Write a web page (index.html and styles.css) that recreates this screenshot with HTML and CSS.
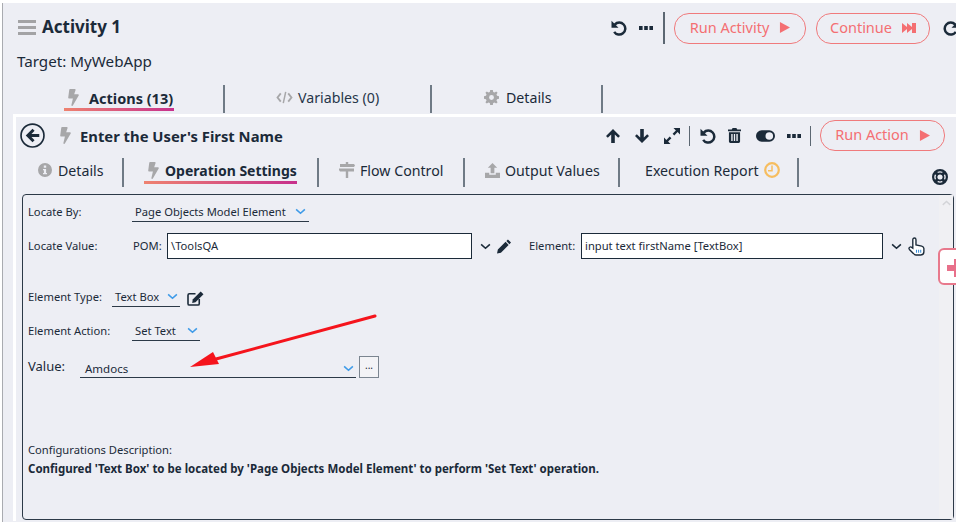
FILE: index.html
```html
<!DOCTYPE html>
<html lang="en">
<head>
    <meta charset="UTF-8">
    <title>Activity 1</title>
    <link rel="stylesheet" href="styles.css">
</head>
<body>
    <svg class="sprites" xmlns="http://www.w3.org/2000/svg">
        <symbol id="i-bolt" viewBox="0 0 320 512"><path d="M296 160H180.6l42.6-129.8C227.2 15 215.7 0 200 0H56C44 0 33.8 8.9 32.2 20.8l-32 240C-1.7 275.2 9.5 288 24 288h118.7L96.6 482.5c-3.6 15.2 8 29.5 23.3 29.5 8.4 0 16.4-4.4 20.8-12l176-304c9.3-15.9-2.2-36-20.7-36z"/></symbol>
        <symbol id="i-undo" viewBox="0 0 16 16"><path d="M3.800 4.600A6 6 0 1 1 3.200 11.800" fill="none" stroke="currentColor" stroke-width="2.500"/><path d="M0.500 0.800 7.500 7.800H0.500z"/></symbol>
        <symbol id="i-redo" viewBox="0 0 16 16"><path d="M12.200 4.600A6 6 0 1 0 12.800 11.800" fill="none" stroke="currentColor" stroke-width="2.500"/><path d="M15.500 0.800 8.500 7.800H15.500z"/></symbol>
        <symbol id="i-dots" viewBox="0 0 14 4"><path d="M0 0h3.600v4H0zM5.200 0h3.600v4H5.200zM10.400 0H14v4h-3.600z"/></symbol>
        <symbol id="i-up" viewBox="0 0 14 14"><path d="M7 0 14 7 12.200 8.800 8.800 5.500V14H5.200V5.500L1.800 8.800 0 7z"/></symbol>
        <symbol id="i-down" viewBox="0 0 14 14"><path d="M7 14 0 7 1.800 5.200 5.200 8.500V0H8.800V8.500L12.200 5.200 14 7z"/></symbol>
        <symbol id="i-expand" viewBox="0 0 16 16"><path d="M9.500 0H16V6.500L13.600 4.100 10.300 7.400 8.600 5.700 11.900 2.400zM0 16V9.500L2.400 11.900 5.700 8.600 7.400 10.300 4.100 13.600 6.500 16z"/></symbol>
        <symbol id="i-trash" viewBox="0 0 14 16"><path d="M5 0H9L10 1.500H14V3.500H0V1.500H4zM1 4.500H13V14.500Q13 16 11.500 16H2.500Q1 16 1 14.500zM3.500 6.500V14H5V6.500zM6.300 6.500V14H7.700V6.500zM9 6.500V14H10.500V6.500z" fill-rule="evenodd"/></symbol>
        <symbol id="i-toggle" viewBox="0 0 20 12"><path d="M6 0H14A6 6 0 0 1 14 12H6A6 6 0 0 1 6 0ZM14 2A4 4 0 1 0 14 10 4 4 0 0 0 14 2Z" fill-rule="evenodd"/></symbol>
        <symbol id="i-code" viewBox="0 0 18 14"><path d="M5 2.500 1.500 7 5 11.500M13 2.500 16.500 7 13 11.500" fill="none" stroke="currentColor" stroke-width="2"/><path d="M10.300 1 7.700 13" fill="none" stroke="currentColor" stroke-width="1.600"/></symbol>
        <symbol id="i-cog" viewBox="0 0 16 16"><path d="M6.600 0H9.400L9.800 2.100 11.300 2.700 13 1.500 14.500 3 13.300 4.700 13.900 6.200 16 6.600V9.400L13.900 9.800 13.300 11.300 14.500 13 13 14.500 11.300 13.300 9.800 13.900 9.400 16H6.600L6.200 13.900 4.700 13.300 3 14.500 1.500 13 2.700 11.300 2.100 9.800 0 9.400V6.600L2.100 6.200 2.700 4.700 1.500 3 3 1.500 4.700 2.700 6.200 2.100ZM8 5.400A2.600 2.600 0 1 0 8 10.600 2.600 2.600 0 0 0 8 5.400Z" fill-rule="evenodd"/></symbol>
        <symbol id="i-info" viewBox="0 0 14 14"><path d="M7 0A7 7 0 1 1 7 14 7 7 0 0 1 7 0ZM5.800 2.600V4.800H8.200V2.600ZM5 6V7.200H5.900V10H5V11.300H9V10H8.100V6Z" fill-rule="evenodd"/></symbol>
        <symbol id="i-sign" viewBox="0 0 16 16"><path d="M6.800 0H9.200V2H15L16 3.500 15 5H1V2H6.800ZM0 6.500H15V9.500H9.200V16H6.800V9.500H1L0 8Z"/></symbol>
        <symbol id="i-upload" viewBox="0 0 16 16"><path d="M8 0 13 5H10V11H6V5H3ZM0 10.500H4.500V12.500H11.500V10.500H16V16H0Z"/></symbol>
        <symbol id="i-clock" viewBox="0 0 16 16"><circle cx="8" cy="8" r="6.800" fill="none" stroke="currentColor" stroke-width="2.200"/><path d="M8 3.500V8.800H4" fill="none" stroke="currentColor" stroke-width="1.500"/></symbol>
        <symbol id="i-buoy" viewBox="0 0 16 16"><path d="M8 0A8 8 0 1 1 8 16 8 8 0 0 1 8 0ZM8 2.200A5.800 5.800 0 1 0 8 13.800 5.800 5.800 0 0 0 8 2.200Z" fill-rule="evenodd"/><circle cx="8" cy="8" r="3.500" fill="none" stroke="currentColor" stroke-width="1.800"/><path d="M2 4.500 4.500 2 6.800 5 5 6.800ZM11.500 2 14 4.500 11 6.800 9.200 5ZM14 11.500 11.500 14 9.200 11 11 9.200ZM4.500 14 2 11.500 5 9.200 6.800 11Z"/></symbol>
        <symbol id="i-play" viewBox="0 0 12 12"><path d="M1 0 12 6 1 12z"/></symbol>
        <symbol id="i-forward" viewBox="0 0 14 10"><path d="M0 0 5 4V0L10 4V0H14V10H10V6L5 10V6L0 10Z"/></symbol>
        <symbol id="i-chevron" viewBox="0 0 12 8"><path d="M1 1.500 6 6 11 1.500" fill="none" stroke="currentColor" stroke-width="1.800"/></symbol>
        <symbol id="i-pencil" viewBox="0 0 16 16"><path d="M12.500 0 16 3.500 14.200 5.300 10.700 1.800ZM9.800 2.700 13.300 6.200 4.500 15 0 16 1 11.500Z"/></symbol>
        <symbol id="i-edit" viewBox="0 0 18 16"><path d="M13 8.500V13.500Q13 15 11.500 15H2.500Q1 15 1 13.500V4.500Q1 3 2.500 3H9" fill="none" stroke="currentColor" stroke-width="1.700"/><path d="M14.500 0.500 17.500 3.500 9 12 5.500 12.800 6 9Z"/></symbol>
        <symbol id="i-hand" viewBox="0 0 16 18"><path d="M4.500 10.500V2.500A1.500 1.500 0 0 1 7.500 2.500V7.500L13 8.600Q15 9.200 15 11V14Q15 17 12 17H7.500Q6 17 5 15.600L1.300 11.800Q0.300 10.500 1.500 9.700 2.500 9 3.500 9.800Z" fill="#fff" stroke="currentColor" stroke-width="1.300"/><path d="M8 12V15M10 12V15M12 12V15" stroke="#3b8fd8" stroke-width="1"/></symbol>
    </svg>

    <div class="page">
        <div class="activity-head">
            <div class="burger"><span></span><span></span><span></span></div>
            <h1>Activity 1</h1>
            <div class="head-tools">
                <svg class="ico undo-top"><use href="#i-undo"/></svg>
                <svg class="ico dots"><use href="#i-dots"/></svg>
                <span class="tool-sep tall"></span>
                <button class="run-btn run-activity">Run Activity <svg class="ico play"><use href="#i-play"/></svg></button>
                <button class="run-btn run-continue">Continue <svg class="ico forward"><use href="#i-forward"/></svg></button>
                <svg class="ico redo-top"><use href="#i-redo"/></svg>
            </div>
        </div>
        <div class="target">Target: MyWebApp</div>

        <div class="tabs main-tabs">
            <div class="tab tab-actions active"><svg class="ico bolt"><use href="#i-bolt"/></svg><b>Actions (13)</b></div>
            <div class="tab tab-variables"><svg class="ico code"><use href="#i-code"/></svg>Variables (0)</div>
            <div class="tab tab-details"><svg class="ico cog"><use href="#i-cog"/></svg>Details</div>
        </div>

        <div class="action-panel">
            <div class="action-head">
                <svg class="back" viewBox="0 0 24 24"><circle cx="12" cy="12" r="11" fill="none" stroke="currentColor" stroke-width="1.600"/><path d="M12 5.500 5.500 12 12 18.500 14 16.500 11 13.500H18.500V10.500H11L14 7.500Z" fill="currentColor"/></svg>
                <svg class="ico bolt"><use href="#i-bolt"/></svg>
                <h2>Enter the User's First Name</h2>
                <div class="action-tools">
                    <svg class="ico arrow-ico"><use href="#i-up"/></svg>
                    <svg class="ico arrow-ico"><use href="#i-down"/></svg>
                    <svg class="ico expand"><use href="#i-expand"/></svg>
                    <span class="tool-sep"></span>
                    <svg class="ico undo"><use href="#i-undo"/></svg>
                    <svg class="ico trash"><use href="#i-trash"/></svg>
                    <svg class="ico toggle"><use href="#i-toggle"/></svg>
                    <svg class="ico dots"><use href="#i-dots"/></svg>
                    <span class="tool-sep"></span>
                    <button class="run-btn run-action">Run Action <svg class="ico play"><use href="#i-play"/></svg></button>
                </div>
            </div>

            <div class="tabs action-tabs">
                <div class="tab t-details"><svg class="ico info"><use href="#i-info"/></svg>Details</div>
                <div class="tab t-operation active"><svg class="ico bolt"><use href="#i-bolt"/></svg><b>Operation Settings</b></div>
                <div class="tab t-flow"><svg class="ico sign"><use href="#i-sign"/></svg>Flow Control</div>
                <div class="tab t-output"><svg class="ico upload"><use href="#i-upload"/></svg>Output Values</div>
                <div class="tab t-report">Execution Report<svg class="ico clock"><use href="#i-clock"/></svg></div>
                <svg class="ico buoy"><use href="#i-buoy"/></svg>
            </div>

            <div class="config-box">
                <div class="row row-locate-by">
                    <label class="lbl lbl-wide">Locate By:</label>
                    <div class="combo combo-by">Page Objects Model Element<svg class="ico chev"><use href="#i-chevron"/></svg></div>
                </div>
                <div class="row row-locate-value">
                    <label class="lbl lbl-wide">Locate Value:</label>
                    <label class="lbl lbl-pom">POM:</label>
                    <div class="field field-pom">\ToolsQA</div>
                    <svg class="ico chev-dark"><use href="#i-chevron"/></svg>
                    <svg class="ico pencil"><use href="#i-pencil"/></svg>
                    <label class="lbl lbl-element">Element:</label>
                    <div class="field field-element">input text firstName [TextBox]</div>
                    <svg class="ico chev-dark"><use href="#i-chevron"/></svg>
                    <svg class="ico hand"><use href="#i-hand"/></svg>
                </div>
                <div class="row row-type">
                    <label class="lbl lbl-type">Element Type:</label>
                    <div class="combo combo-type">Text Box<svg class="ico chev"><use href="#i-chevron"/></svg></div>
                    <svg class="ico edit"><use href="#i-edit"/></svg>
                </div>
                <div class="row row-action">
                    <label class="lbl lbl-wide">Element Action:</label>
                    <div class="combo combo-action">Set Text<svg class="ico chev"><use href="#i-chevron"/></svg></div>
                </div>
                <div class="row row-value">
                    <label class="lbl lbl-value">Value:</label>
                    <div class="combo combo-value">Amdocs<svg class="ico chev"><use href="#i-chevron"/></svg></div>
                    <button class="more-btn">...</button>
                </div>
                <div class="desc-title">Configurations Description:</div>
                <div class="desc-text">Configured 'Text Box' to be located by 'Page Objects Model Element' to perform 'Set Text' operation.</div>
                <div class="scroll-track"><svg class="ico scroll-up"><use href="#i-chevron"/></svg></div>
            </div>
        </div>
    </div>

    <!-- red annotation arrow and floating add button sit over the form -->
    <svg class="annotation" viewBox="0 0 200 60">
        <path d="M189 2 30 45" stroke="#f5141c" stroke-width="3" stroke-linecap="round" fill="none"/>
        <path d="M4 53 27 38 33 50Z" fill="#f5141c"/>
    </svg>
    <div class="add-float"><svg viewBox="0 0 20 20"><path d="M7 1H13V7H20V13H13V19H7V13H0V7H7Z"/></svg></div>
</body>
</html>
```
FILE: styles.css
```css
html, body {
    margin: 0;
    padding: 0;
}
body {
    width: 956px;
    height: 522px;
    overflow: hidden;
    position: relative;
    background-color: #fff;
    font-family: "Noto Sans", "Open Sans", sans-serif;
    font-size: 14px;
    color: #1b2a39;
}
.sprites {
    display: none;
}
.ico {
    display: block;
    flex: none;
    fill: currentColor;
}
.page {
    height: 519px;
    margin: 3px 0 0 2px;
    border-left: 1px solid #a9abb0;
    background-color: #edeef4;
}

/* activity header */
.activity-head {
    display: flex;
    align-items: center;
    height: 48px;
    padding-left: 15px;
}
.burger {
    display: flex;
    flex-direction: column;
    gap: 3px;
    width: 18px;
    margin-right: 6px;
}
.burger span {
    height: 3px;
    background-color: #a3a3a5;
}
h1 {
    margin: 0;
    padding-bottom: 1px;
    font-size: 17px;
    font-weight: 700;
}
.head-tools {
    display: flex;
    align-items: center;
    margin: 2px -3px 0 auto;
}
.undo-top {
    width: 16px;
    height: 16px;
    margin-right: 12px;
}
.dots {
    width: 14px;
    height: 4px;
}
.tool-sep {
    width: 1px;
    height: 20px;
    background-color: #5c6772;
}
.tool-sep.tall {
    width: 2px;
    height: 32px;
    margin: 0 9px 0 10px;
}
.run-btn {
    display: flex;
    align-items: center;
    justify-content: center;
    box-sizing: border-box;
    height: 31px;
    padding: 0 0 3px;
    border: 1px solid #f07a7c;
    border-radius: 15px;
    background: transparent;
    font-family: inherit;
    font-size: 14.5px;
    color: #f46f72;
}
.run-btn .ico {
    margin-top: 2px;
}
.run-activity {
    width: 132px;
    gap: 10px;
    margin-right: 10px;
}
.run-continue {
    width: 114px;
    gap: 10px;
    margin-right: 13px;
}
.run-action {
    width: 125px;
    gap: 10px;
    margin-left: 9px;
}
.play {
    width: 11px;
    height: 11px;
}
.forward {
    width: 14px;
    height: 10px;
}
.redo-top {
    width: 16px;
    height: 16px;
}
.target {
    height: 30px;
    padding: 2px 0 0 14px;
    font-size: 15.2px;
    line-height: 17px;
}

/* tabs */
.tabs {
    display: flex;
}
.tab {
    display: flex;
    align-items: center;
    position: relative;
    box-sizing: border-box;
    border-right: 2px solid #6f7a85;
    font-size: 14.2px;
}
.tab b {
    font-size: 14px;
    font-weight: 700;
}
.tab svg {
    color: #a7a7a9;
}
.tab.active::after {
    content: "";
    position: absolute;
    height: 3px;
    background: linear-gradient(90deg, #ee8270, #c7308c);
}
.main-tabs {
    height: 28px;
    margin-top: 2px;
}
.main-tabs .tab {
    padding-bottom: 3px;
}
.bolt {
    width: 11px;
    height: 17px;
    color: #a7a7a9;
}
.tab-actions {
    width: 222px;
    padding-left: 65px;
    gap: 10px;
}
.tab-actions b {
    font-size: 14.5px;
}
.tab-actions::after {
    left: 61px;
    width: 110px;
    bottom: 2px;
}
.tab-variables {
    width: 207px;
    padding-left: 51px;
    color: #27364a;
    gap: 5px;
}
.code {
    width: 17px;
    height: 13px;
}
.tab-details {
    width: 171px;
    padding-left: 52px;
    gap: 7px;
}
.cog {
    width: 15px;
    height: 15px;
}

/* action panel */
.action-panel {
    margin-top: 1px;
    margin-left: 10px;
    border-top: 3px solid #fff;
    border-left: 3px solid #fff;
    height: 404px;
}
.action-head {
    display: flex;
    align-items: center;
    height: 37px;
    padding-left: 4px;
}
.back {
    width: 25px;
    height: 25px;
    flex: none;
    margin-right: 15px;
}
.action-head .bolt {
    margin-right: 9px;
}
h2 {
    margin: 0;
    font-size: 14.8px;
    font-weight: 700;
}
.action-tools {
    display: flex;
    align-items: center;
    margin-left: auto;
    margin-right: 11px;
}
.arrow-ico {
    width: 14px;
    height: 14px;
    margin-right: 15px;
}
.expand {
    width: 16px;
    height: 16px;
    margin-right: 9px;
}
.undo {
    width: 16px;
    height: 16px;
    margin: 0 12px 0 10px;
}
.trash {
    width: 13px;
    height: 15px;
    margin-right: 15px;
}
.toggle {
    width: 19px;
    height: 12px;
    margin-right: 12px;
}
.action-tools .dots {
    margin-right: 9px;
}
.action-tabs {
    height: 29px;
    margin-top: 4px;
    position: relative;
}
.action-tabs .tab {
    padding-bottom: 5px;
}
.t-details {
    width: 108px;
    padding-left: 22px;
    gap: 6px;
}
.info {
    width: 14px;
    height: 14px;
}
.t-operation {
    width: 195px;
    padding-left: 24px;
    gap: 6px;
}
.t-operation::after {
    left: 20px;
    width: 153px;
    bottom: 3px;
}
.t-flow {
    width: 146px;
    padding-left: 20px;
    gap: 5px;
}
.sign {
    width: 16px;
    height: 16px;
}
.t-output {
    width: 155px;
    padding-left: 20px;
    gap: 5px;
}
.upload {
    width: 15px;
    height: 15px;
}
.t-report {
    width: 179px;
    padding-left: 25px;
    gap: 5px;
}
.tab .clock {
    width: 16px;
    height: 16px;
    color: #f6bd5f;
}
.buoy {
    position: absolute;
    left: 916px;
    top: 11px;
    width: 16px;
    height: 16px;
}

/* settings box */
.config-box {
    position: relative;
    box-sizing: border-box;
    width: 932px;
    height: 326px;
    margin: 7px 0 0 6px;
    padding: 9px 0 0 5px;
    border: 1px solid #2c3947;
    border-radius: 4px;
    font-size: 11.2px;
}
.row {
    display: flex;
    align-items: center;
}
.lbl-wide {
    width: 104px;
    flex: none;
}
.combo {
    display: flex;
    align-items: center;
    justify-content: space-between;
    box-sizing: border-box;
    height: 18px;
    border-bottom: 1px solid #2c3947;
    padding: 0 0 0 3px;
}
.chev {
    width: 11px;
    height: 7px;
    color: #3f9be8;
}
.row-locate-by {
    height: 18px;
}
.row-locate-by .lbl,
.row-type .lbl,
.row-action .lbl {
    padding-bottom: 4px;
}
.combo-by {
    width: 177px;
    padding-right: 3px;
    padding-bottom: 3px;
}
.row-locate-value {
    height: 26px;
    margin-top: 11px;
}
.lbl-pom {
    width: 35px;
    flex: none;
    padding-left: 1px;
    box-sizing: border-box;
}
.row-locate-value .lbl {
    padding-bottom: 2px;
}
.field {
    box-sizing: border-box;
    height: 26px;
    line-height: 24px;
    padding-left: 3px;
    border: 1px solid #1b2a39;
    background-color: #fff;
    font-size: 11.2px;
}
.field-pom {
    width: 305px;
}
.chev-dark {
    width: 11px;
    height: 7px;
    margin: 0 6px 0 8px;
}
.pencil {
    width: 14px;
    height: 15px;
}
.lbl-element {
    margin-left: 18px;
    width: 52px;
    flex: none;
}
.field-element {
    width: 302px;
}
.hand {
    width: 17px;
    height: 19px;
}
.row-type {
    height: 18px;
    margin-top: 30px;
}
.lbl-type {
    width: 84px;
    flex: none;
}
.combo-type {
    width: 68px;
    padding-right: 2px;
    padding-bottom: 3px;
}
.edit {
    width: 17px;
    height: 15px;
    margin-left: 7px;
}
.row-action {
    height: 18px;
    margin-top: 16px;
}
.combo-action {
    width: 68px;
    padding-right: 2px;
    padding-bottom: 3px;
}
.row-value {
    height: 22px;
    margin-top: 15px;
}
.lbl-value {
    width: 52px;
    flex: none;
    font-size: 13px;
    padding-bottom: 2px;
}
.combo-value {
    width: 276px;
    height: 22px;
    padding: 4px 2px 0 5px;
    font-size: 11.5px;
}
.more-btn {
    box-sizing: border-box;
    width: 20px;
    height: 22px;
    margin-left: 3px;
    padding: 0 0 4px;
    border: 1px solid #7b8590;
    background-color: #f3f3f6;
    font-family: inherit;
    font-size: 10px;
    color: #1b2a39;
}
.desc-title {
    margin-top: 63px;
    height: 19px;
    line-height: 18px;
}
.desc-text {
    height: 18px;
    line-height: 18px;
    font-size: 11.5px;
    font-weight: 700;
}
.scroll-track {
    position: absolute;
    top: 0;
    right: 0;
    bottom: 0;
    width: 14px;
    background-color: #f0f0f3;
}
.scroll-up {
    width: 9px;
    height: 6px;
    margin: 5px auto 0;
    color: #d3d4d8;
    transform: rotate(180deg);
}

/* overlays */
.annotation {
    position: absolute;
    left: 186px;
    top: 314px;
    width: 200px;
    height: 60px;
}
.add-float {
    position: absolute;
    left: 938px;
    top: 248px;
    box-sizing: border-box;
    width: 30px;
    height: 37px;
    padding: 8px 0 0 7px;
    border: 2px solid #e8798c;
    border-radius: 6px;
    background-color: #fff;
}
.add-float svg {
    display: block;
    width: 20px;
    height: 20px;
    fill: #e8708a;
}
```
